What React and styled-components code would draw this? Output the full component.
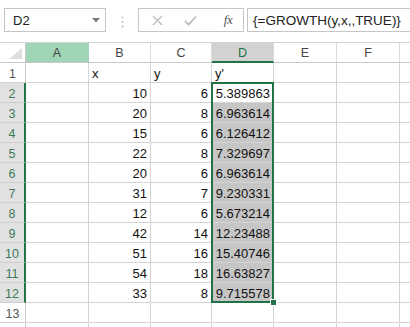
import React from "react"
import styled, { createGlobalStyle } from "styled-components"

const GREEN = "#217346"
const GRID = "#d4d4d4"

const GlobalStyle = createGlobalStyle`
  body {
    margin: 0;
    overflow: hidden;
    background: #ffffff;
    font-family: "Liberation Sans", Arial, sans-serif;
  }
`

// G is only a sliver at the right edge, its letter falls outside the window
const columns = [
  { name: "", width: 26 },
  { name: "A", width: 63 },
  { name: "B", width: 62 },
  { name: "C", width: 61 },
  { name: "D", width: 62 },
  { name: "E", width: 63 },
  { name: "F", width: 63 },
  { name: "G", width: 40, hidden: true },
]

const xs = [10, 20, 15, 22, 20, 31, 12, 42, 51, 54, 33]
const ys = [6, 8, 6, 8, 6, 7, 6, 14, 16, 18, 8]
const growth = [
  "5.389863", "6.963614", "6.126412", "7.329697", "6.963614", "9.230331",
  "5.673214", "12.23488", "15.40746", "16.63827", "9.715578",
]

const rows = [
  { n: 1, cells: ["", "x", "y", "y'"], align: "left" },
  ...xs.map((x, i) => ({ n: i + 2, cells: ["", x, ys[i], growth[i]], align: "right" })),
  { n: 13, cells: [] },
  { n: 14, cells: [], hidden: true },
]

const App = () => {
  return (
    <>
      <GlobalStyle />
      <Toolbar>
        <NameBox>
          <span>D2</span>
          <svg width="8" height="5" viewBox="0 0 8 5">
            <path d="M0 0 L8 0 L4 4.5 Z" fill="#7a7a7a" />
          </svg>
        </NameBox>
        <Grip>
          <svg width="3" height="12" viewBox="0 0 3 12">
            <circle cx="1.5" cy="1.5" r="1" fill="#bdbdbd" />
            <circle cx="1.5" cy="6" r="1" fill="#bdbdbd" />
            <circle cx="1.5" cy="10.5" r="1" fill="#bdbdbd" />
          </svg>
        </Grip>
        <ButtonBox>
          <IconSlot>
            <svg width="11" height="11" viewBox="0 0 11 11">
              <path d="M1 1 L10 10 M10 1 L1 10" stroke="#bcbcbc" strokeWidth="1.3" />
            </svg>
          </IconSlot>
          <IconSlot>
            <svg width="13" height="11" viewBox="0 0 13 11">
              <path d="M1 6 L4.6 9.6 L12 1.5" stroke="#bcbcbc" strokeWidth="1.8" fill="none" />
            </svg>
          </IconSlot>
          <IconSlot $wide>
            <Fx>fx</Fx>
          </IconSlot>
        </ButtonBox>
        <FormulaBox>{"{=GROWTH(y,x,,TRUE)}"}</FormulaBox>
      </Toolbar>

      <Sheet $cols={columns.map((c) => c.width + "px").join(" ")}>
        {columns.map((c, i) =>
          i === 0 ? (
            <Corner key="corner" $row={1} $col={1}>
              <svg width="14" height="12" viewBox="0 0 14 12">
                <path d="M13 0 L13 11 L0 11 Z" fill="#dedede" />
              </svg>
            </Corner>
          ) : (
            <ColHeader
              key={c.name}
              $row={1}
              $col={i + 1}
              $state={c.name === "A" ? "hover" : c.name === "D" ? "active" : ""}
            >
              {c.hidden ? "" : c.name}
            </ColHeader>
          )
        )}

        {rows.map((r) => {
          const selected = r.n >= 2 && r.n <= 12
          return (
            <React.Fragment key={r.n}>
              <RowHeader $row={r.n + 1} $col={1} $selected={selected}>
                {r.hidden ? "" : r.n}
              </RowHeader>
              {columns.slice(1).map((c, ci) => (
                <Cell
                  key={c.name}
                  $row={r.n + 1}
                  $col={ci + 2}
                  $align={ci === 0 ? "left" : r.align}
                  $shade={selected && c.name === "D" && r.n > 2}
                >
                  {r.cells[ci] ?? ""}
                </Cell>
              ))}
            </React.Fragment>
          )
        })}

        <Selection>
          <FillHandle />
        </Selection>
      </Sheet>
    </>
  )
}

const Toolbar = styled.div`
  display: flex;
  align-items: flex-start;
  height: 42px;
  box-sizing: border-box;
  padding: 8px 0 0 4px;
  background: #ffffff;
  overflow: hidden;
`

const Box = styled.div`
  height: 24px;
  box-sizing: border-box;
  border: 1px solid #c6c6c6;
  background: #ffffff;
  display: flex;
  align-items: center;
`

const NameBox = styled(Box)`
  width: 102px;
  padding: 0 5px 0 8px;
  justify-content: space-between;
  font-size: 13px;
  color: #222;
`

const Grip = styled.div`
  width: 32px;
  height: 24px;
  display: flex;
  align-items: center;
  justify-content: center;
  padding-top: 3px;
  box-sizing: border-box;
`

const ButtonBox = styled(Box)`
  width: 106px;
  padding-left: 2px;
`

const IconSlot = styled.div`
  width: ${({ $wide }) => ($wide ? "36px" : "33px")};
  padding-left: ${({ $wide }) => ($wide ? "6px" : "0")};
  box-sizing: border-box;
  display: flex;
  justify-content: center;
  align-items: center;
`

const Fx = styled.span`
  font-family: "Liberation Serif", "Times New Roman", serif;
  font-style: italic;
  font-size: 13px;
  color: #555;
  letter-spacing: -0.5px;
`

const FormulaBox = styled(Box)`
  flex: 1;
  margin-left: 3px;
  margin-right: -4px;
  padding-left: 5px;
  font-size: 13.5px;
  color: #222;
`

const Sheet = styled.div`
  display: grid;
  grid-template-columns: ${({ $cols }) => $cols};
  grid-template-rows: 21px;
  grid-auto-rows: 20px;
  font-size: 13px;
  color: #111;
  overflow: hidden;
`

const HeaderBase = styled.div`
  grid-row: ${({ $row }) => $row};
  grid-column: ${({ $col }) => $col};
  box-sizing: border-box;
  display: flex;
  align-items: center;
  justify-content: center;
  font-size: 12.5px;
`

const Corner = styled(HeaderBase)`
  border-top: 1px solid ${GRID};
  border-right: 1px solid #c8c8c8;
  border-bottom: 1px solid #c8c8c8;
  align-items: flex-end;
  justify-content: flex-end;
  padding: 0 2px 2px 0;
`

const ColHeader = styled(HeaderBase)`
  border-top: 1px solid ${GRID};
  border-right: 1px solid ${({ $state }) => ($state === "hover" ? "#9fd5b7" : "#dadada")};
  border-bottom: ${({ $state }) => ($state === "active" ? `2px solid ${GREEN}` : "1px solid #c8c8c8")};
  background: ${({ $state }) =>
    $state === "hover" ? "#9fd5b7" : $state === "active" ? "#d2d2d2" : "#ffffff"};
  color: ${({ $state }) => ($state === "active" ? GREEN : "#444")};
  padding-top: ${({ $state }) => ($state === "active" ? "1px" : "0")};
`

const RowHeader = styled(HeaderBase)`
  border-right: ${({ $selected }) => ($selected ? `2px solid ${GREEN}` : "1px solid #c8c8c8")};
  border-bottom: 1px solid ${({ $selected }) => ($selected ? "#cfcfcf" : GRID)};
  background: ${({ $selected }) => ($selected ? "#e1e1e1" : "#ffffff")};
  color: ${({ $selected }) => ($selected ? "#3d7a55" : "#555")};
  padding-top: 2px;
`

const Cell = styled.div`
  grid-row: ${({ $row }) => $row};
  grid-column: ${({ $col }) => $col};
  box-sizing: border-box;
  border-right: 1px solid ${GRID};
  border-bottom: 1px solid ${GRID};
  background: ${({ $shade }) => ($shade ? "#c6c6c6" : "#ffffff")};
  display: flex;
  align-items: flex-end;
  justify-content: ${({ $align }) => ($align === "right" ? "flex-end" : "flex-start")};
  padding: 0 3px 1px 3px;
  line-height: 15px;
  white-space: nowrap;
  overflow: hidden;
`

const Selection = styled.div`
  grid-column: 5;
  grid-row: 3 / 14;
  margin: -1px 0 0 -1px;
  border: 2px solid ${GREEN};
  position: relative;
  pointer-events: none;
`

const FillHandle = styled.div`
  position: absolute;
  right: -5px;
  bottom: -5px;
  width: 5px;
  height: 5px;
  background: ${GREEN};
  border: 1px solid #ffffff;
`

export default App
